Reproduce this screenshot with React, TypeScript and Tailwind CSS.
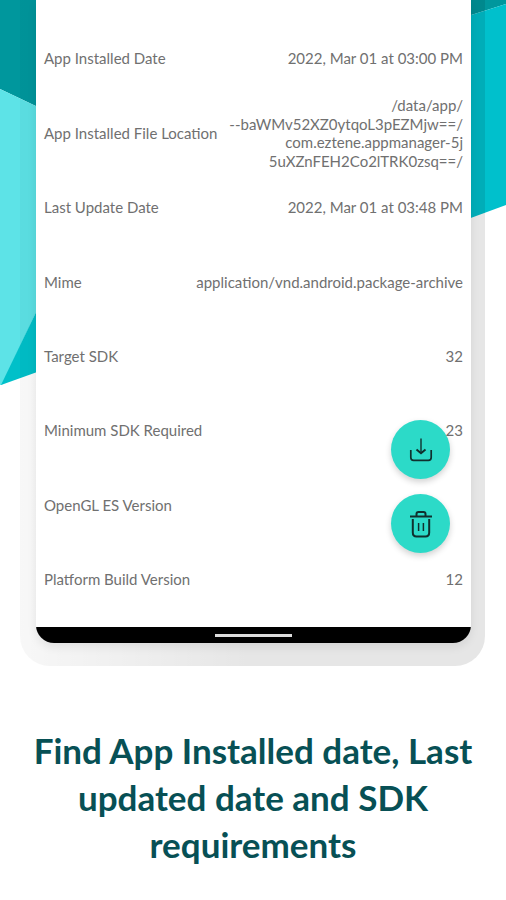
import React from 'react';

interface InfoRow {
  label: string;
  value: string[];
  labelClass?: string;
  valueClass?: string;
}

const rows: InfoRow[] = [
  { label: 'App Installed Date', value: ['2022, Mar 01 at 03:00 PM'] },
  {
    label: 'App Installed File Location',
    value: [
      '/data/app/',
      '--baWMv52XZ0ytqoL3pEZMjw==/',
      'com.eztene.appmanager-5j',
      '5uXZnFEH2Co2lTRK0zsq==/',
    ],
  },
  { label: 'Last Update Date', value: ['2022, Mar 01 at 03:48 PM'] },
  { label: 'Mime', value: ['application/vnd.android.package-archive'] },
  { label: 'Target SDK', value: ['32'] },
  { label: 'Minimum SDK Required', value: ['23'] },
  { label: 'OpenGL ES Version', value: [] },
  { label: 'Platform Build Version', value: ['12'] },
];

function Backdrop() {
  return (
    <svg className="absolute inset-0" width="506" height="900" viewBox="0 0 506 900">
      <path d="M0 0H40V108L0 89Z" fill="#00979d" />
      <path d="M0 89L40 108V304L2 385H0Z" fill="#5de3e7" />
      <path d="M40 304V371L1 385Z" fill="#00c0c9" />
      <path d="M468 0H506V4L468 16Z" fill="#00979d" />
      <path d="M468 16L506 4V205L468 219Z" fill="#00c0cc" />
    </svg>
  );
}

function DownloadIcon() {
  return (
    <svg width="24" height="24" viewBox="0 0 24 24" fill="none" stroke="#10302e" strokeWidth="1.7">
      <path d="M1.8 12V19.5Q1.8 22.3 4.6 22.3H19.4Q22.2 22.3 22.2 19.5V12" />
      <path d="M12 0.5V14" strokeWidth="1.4" />
      <path d="M7.5 11.5L12 15.2L16.5 11.5" strokeWidth="2" />
    </svg>
  );
}

function TrashIcon() {
  return (
    <svg width="24" height="28" viewBox="0 0 24 28" fill="none" stroke="#10302e" strokeWidth="2">
      <path d="M1 6.5H23" strokeWidth="1.8" />
      <path d="M7.5 6V4Q7.5 2 9.5 2H14.5Q16.5 2 16.5 4V6" />
      <path d="M3.8 9V22.5Q3.8 26.5 7.5 26.5H16.5Q20.2 26.5 20.2 22.5V9" />
      <path d="M9.6 13V21M14.4 13V21" strokeWidth="1.5" />
    </svg>
  );
}

function Row({ label, value, labelClass = '', valueClass = '' }: InfoRow) {
  return (
    <div className="flex h-[74.4px] items-center justify-between border-b border-transparent px-2 pt-1 whitespace-nowrap">
      <span className={labelClass}>{label}</span>
      <div className={`flex flex-col items-end ${valueClass}`}>
        {value.map((line) => (
          <span key={line}>{line}</span>
        ))}
      </div>
    </div>
  );
}

export default function App() {
  return (
    <div className="relative h-[900px] w-[506px] overflow-hidden bg-white font-['Lato',sans-serif]">
      <Backdrop />
      <div className="absolute -top-10 left-[20px] h-[706px] w-[465px] rounded-[30px] bg-linear-to-r from-black/3 via-black/10 to-black/10" />
      <div className="relative ml-9 flex h-[643px] w-[435px] flex-col overflow-hidden rounded-b-[18px] bg-white pt-5 shadow-[0_4px_10px_rgba(0,0,0,0.08)]">
        <div className="flex-1 text-[15px] leading-[18.5px] text-[#707070]">
          {rows.map((row) => (
            <Row key={row.label} {...row} />
          ))}
        </div>
        <div className="flex h-4 shrink-0 items-center justify-center bg-black">
          <div className="h-[3px] w-[77px] bg-[#ddd]" />
        </div>
        <div className="absolute top-[420px] right-[21px] flex flex-col gap-[15px]">
          <button className="flex size-[59px] items-center justify-center rounded-full bg-[#2cdac8] shadow-[0_3px_6px_rgba(0,0,0,0.18)]">
            <DownloadIcon />
          </button>
          <button className="flex size-[59px] items-center justify-center rounded-full bg-[#2cdac8] shadow-[0_3px_6px_rgba(0,0,0,0.18)]">
            <TrashIcon />
          </button>
        </div>
      </div>
      <h1 className="relative mt-[84px] text-center text-[35px] leading-[47px] font-bold whitespace-nowrap text-[#075055]">
        <span className="block">Find App Installed date, Last</span>
        <span className="block">updated date and SDK</span>
        <span className="block">requirements</span>
      </h1>
    </div>
  );
}
